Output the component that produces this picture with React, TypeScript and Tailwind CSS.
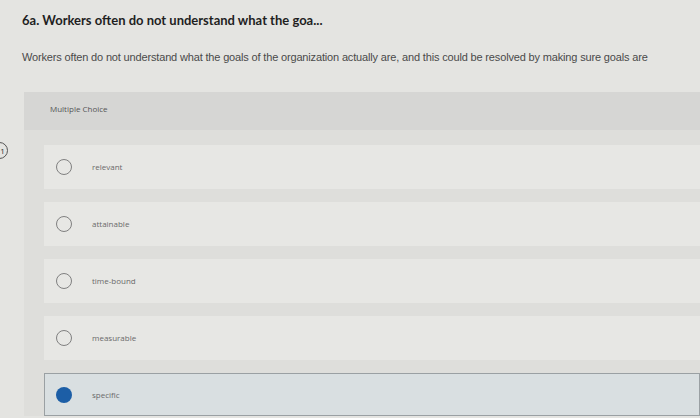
import React from 'react';

const options = [
  { label: 'relevant', selected: false },
  { label: 'attainable', selected: false },
  { label: 'time-bound', selected: false },
  { label: 'measurable', selected: false },
  { label: 'specific', selected: true },
];

export default function App() {
  return (
    <div className="relative w-[700px] h-[418px] overflow-hidden bg-[#e4e4e1] font-['Open_Sans',sans-serif]">
      {/* Question number badge, cut off on the left */}
      <div className="absolute left-[-9px] top-[142px] w-[17px] h-[17px] rounded-full border border-[#555] flex items-center justify-center text-[8px] text-[#333] pl-[6px]">
        1
      </div>

      {/* Header */}
      <div className="pl-[22px] pt-[12px]">
        <h1 className="font-['Lato',sans-serif] font-bold text-[13px] leading-[16px] text-[#1f1f1f]">
          6a. Workers often do not understand what the goa...
        </h1>
        <p className="mt-[22px] text-[11px] leading-[14px] text-[#4a4a4a] font-['Liberation_Sans',sans-serif] tracking-[-0.16px]">
          Workers often do not understand what the goals of the organization actually are, and this could be resolved by making sure goals are
        </p>
      </div>

      {/* Multiple choice panel */}
      <div className="ml-[24px] mt-[28px] bg-[#dededb]">
        <div className="h-[38px] bg-[#d6d6d4] pl-[26px] pt-[11px] text-[8px] text-[#555]">
          Multiple Choice
        </div>
        <div className="pl-[20px] pt-[15px] flex flex-col gap-[13px]">
          {options.map((o) =>
            o.selected ? (
              <div
                key={o.label}
                className="h-[43px] flex items-center gap-[20px] pl-[11px] bg-[#d9dfe1] border border-[#9aa0a3]"
              >
                <span className="w-[16px] h-[16px] rounded-full bg-[#1c5ea6]" />
                <span className="text-[8px] text-[#6a6a6a]">{o.label}</span>
              </div>
            ) : (
              <div key={o.label} className="h-[44px] flex items-center gap-[20px] pl-[12px] bg-[#e7e7e4]">
                <span className="w-[16px] h-[16px] rounded-full border-[1.5px] border-[#808080]" />
                <span className="text-[8px] text-[#6a6a6a]">{o.label}</span>
              </div>
            )
          )}
        </div>
      </div>
    </div>
  );
}
